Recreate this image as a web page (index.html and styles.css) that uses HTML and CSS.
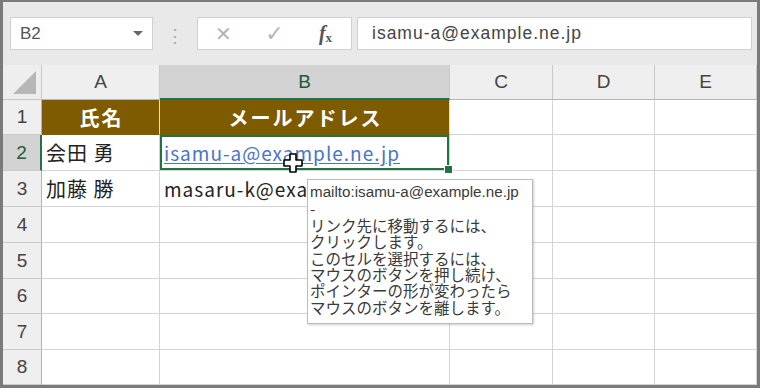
FILE: index.html
```html
<!DOCTYPE html>
<html lang="ja">

<head>
    <meta charset="utf-8">
    <title>ハイパーリンク</title>
    <link rel="stylesheet" href="styles.css">
</head>

<body>
    <div class="frame">
        <div class="toolbar">
            <div class="namebox">
                <span>B2</span>
                <span class="arrow"></span>
            </div>
            <div class="dots">⋮</div>
            <div class="fbtns">
                <span class="fbtn">✕</span>
                <span class="fbtn check">✓</span>
                <span class="fbtn fx"><i>f</i><sub>x</sub></span>
            </div>
            <div class="formula">isamu-a@example.ne.jp</div>
        </div>

        <div class="sheet">
            <div class="corner"><span class="tri"></span></div>
            <div class="colhead">A</div>
            <div class="colhead sel">B</div>
            <div class="colhead">C</div>
            <div class="colhead">D</div>
            <div class="colhead">E</div>

            <div class="rowhead">1</div>
            <div class="cell title">氏名</div>
            <div class="cell title">メールアドレス</div>
            <div class="cell"></div>
            <div class="cell"></div>
            <div class="cell"></div>

            <div class="rowhead sel">2</div>
            <div class="cell">会田 勇</div>
            <div class="cell active">
                <span class="link">isamu-a@example.ne.jp</span>
                <span class="handle"></span>
                <span class="cursor">
                    <svg width="22" height="22" viewBox="0 0 22 22">
                        <path d="M8 2h6v6h6v6h-6v6h-6v-6h-6v-6h6z" fill="#fff" stroke="#000" stroke-width="1.6" stroke-linejoin="round"/>
                    </svg>
                </span>
            </div>
            <div class="cell"></div>
            <div class="cell"></div>
            <div class="cell"></div>

            <div class="rowhead">3</div>
            <div class="cell">加藤 勝</div>
            <div class="cell over"><span class="mail">masaru-k@example.ne.jp</span></div>
            <div class="cell"></div>
            <div class="cell"></div>
            <div class="cell"></div>

            <div class="rowhead">4</div>
            <div class="cell"></div><div class="cell"></div><div class="cell"></div><div class="cell"></div><div class="cell"></div>
            <div class="rowhead">5</div>
            <div class="cell"></div><div class="cell"></div><div class="cell"></div><div class="cell"></div><div class="cell"></div>
            <div class="rowhead">6</div>
            <div class="cell"></div><div class="cell"></div><div class="cell"></div><div class="cell"></div><div class="cell"></div>
            <div class="rowhead">7</div>
            <div class="cell"></div><div class="cell"></div><div class="cell"></div><div class="cell"></div><div class="cell"></div>
            <div class="rowhead">8</div>
            <div class="cell"></div><div class="cell"></div><div class="cell"></div><div class="cell"></div><div class="cell"></div>

            <div class="tooltip">
                <p class="url">mailto:isamu-a@example.ne.jp</p>
                <p>-</p>
                <p>リンク先に移動するには、</p>
                <p>クリックします。</p>
                <p>このセルを選択するには、</p>
                <p>マウスのボタンを押し続け、</p>
                <p>ポインターの形が変わったら</p>
                <p>マウスのボタンを離します。</p>
            </div>
        </div>
    </div>
</body>

</html>
```

FILE: styles.css
```css
body {
    margin: 0;
    font-family: "Noto Sans CJK JP", "Noto Sans", sans-serif;
}

.frame {
    width: 760px;
    height: 388px;
    box-sizing: border-box;
    border: 3px solid #7a7a7a;
    border-top-width: 2px;
    background-color: #e9e9e9;
    overflow: hidden;
}

/* formula bar */

.toolbar {
    display: flex;
    align-items: center;
    height: 33px;
    padding: 15px 5px 15px 7px;
}

.namebox {
    height: 31px;
    border: 1px solid #cfcfcf;
    background-color: #fff;
    display: flex;
    align-items: center;
    justify-content: space-between;
    padding: 0 9px 0 9px;
    width: 123px;
    font-family: "Liberation Sans", sans-serif;
    font-size: 17px;
    color: #555;
}

.arrow {
    width: 0;
    height: 0;
    border-left: 5px solid transparent;
    border-right: 5px solid transparent;
    border-top: 5px solid #666;
}

.dots {
    width: 44px;
    text-align: center;
    color: #aaa;
    font-size: 18px;
}

.fbtns {
    width: 153px;
    height: 31px;
    border: 1px solid #cfcfcf;
    background-color: #fff;
    display: flex;
    align-items: center;
}

.fbtn {
    width: 51px;
    text-align: center;
    color: #b4b4b4;
    font-size: 20px;
    font-family: "DejaVu Sans", sans-serif;
}

.check {
    font-size: 22px;
}

.fx {
    color: #555;
    font-family: "Liberation Serif", serif;
    font-weight: bold;
    font-size: 20px;
}

.fx sub {
    font-size: 13px;
    vertical-align: -2px;
}

.formula {
    margin-left: 5px;
    height: 31px;
    border: 1px solid #cfcfcf;
    background-color: #fff;
    padding-left: 14px;
    display: flex;
    align-items: center;
    flex: 1;
    font-family: "Liberation Sans", sans-serif;
    font-size: 17.5px;
    letter-spacing: 1px;
    color: #444;
}

/* sheet */

.sheet {
    position: relative;
    display: grid;
    grid-template-columns: 39px 118px 290px 103px 102px 102px;
    grid-template-rows: 35px 35px 36px 36px 36px 36px 35px 36px 35px;
    background-color: #fff;
}

.corner {
    background-color: #eeeeee;
    border-right: 1px solid #c8c8c8;
    border-bottom: 1px solid #c8c8c8;
    position: relative;
}

.tri {
    position: absolute;
    right: 5px;
    bottom: 5px;
    width: 0;
    height: 0;
    border-left: 23px solid transparent;
    border-bottom: 23px solid #b7b7b7;
}

.colhead,
.rowhead {
    background-color: #efefef;
    color: #444;
    font-family: "Liberation Sans", sans-serif;
    font-size: 19px;
    display: flex;
    align-items: center;
    justify-content: center;
}

.colhead {
    border-right: 1px solid #c9c9c9;
    border-bottom: 1px solid #b4b4b4;
}

.colhead.sel {
    background-color: #d3d3d3;
    color: #225a36;
    border-bottom: 2px solid #217346;
}

.rowhead {
    border-right: 1px solid #b4b4b4;
    border-bottom: 1px solid #c9c9c9;
}

.rowhead.sel {
    background-color: #d3d3d3;
    color: #225a36;
    border-right: 2px solid #217346;
}

.cell {
    border-right: 1px solid #d4d4d4;
    border-bottom: 1px solid #d4d4d4;
    display: flex;
    align-items: center;
    padding-left: 4px;
    font-size: 20px;
    letter-spacing: 1px;
    color: #222;
    white-space: nowrap;
}

.cell.title {
    background-color: #7f5b00;
    color: #fff;
    font-weight: bold;
    justify-content: center;
    padding-left: 0;
    letter-spacing: 2px;
    text-indent: 2px;
    border-right-color: #e8dcc0;
    border-bottom-color: #7f5b00;
}

.cell.over {
    overflow: visible;
    border-right: none;
}

.cell.active {
    position: relative;
    box-shadow: inset 0 0 0 2px #217346;
}

.link,
.mail {
    font-size: 19px;
    letter-spacing: 1px;
}

.link {
    color: #4a74c4;
    text-decoration: underline;
    text-underline-offset: 2px;
}

.handle {
    position: absolute;
    right: -4px;
    bottom: -4px;
    width: 7px;
    height: 7px;
    background-color: #217346;
    border: 1px solid #fff;
    z-index: 2;
}

.cursor {
    position: absolute;
    left: 122px;
    top: 17px;
    line-height: 0;
}

.tooltip {
    position: absolute;
    left: 304px;
    top: 114px;
    width: 226px;
    height: 145px;
    box-sizing: border-box;
    border: 1px solid #bcbcbc;
    background-color: #fff;
    box-shadow: 1px 1px 2px rgba(0, 0, 0, 0.2);
    padding: 4px 0 0 2px;
    z-index: 3;
}

.tooltip p {
    margin: 0;
    font-size: 15.5px;
    line-height: 16.4px;
    color: #3a3a3a;
    white-space: nowrap;
}

.tooltip .url {
    font-family: "Liberation Sans", sans-serif;
    font-size: 15.2px;
}
```
